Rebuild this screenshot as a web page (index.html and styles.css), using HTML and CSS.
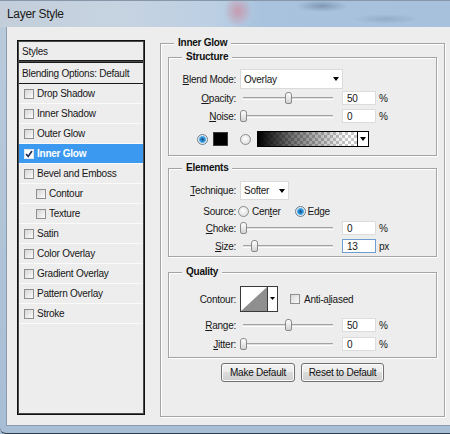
FILE: index.html
```html
<!DOCTYPE html>
<html>
<head>
<meta charset="utf-8">
<title>Layer Style</title>
<link rel="stylesheet" href="styles.css">
</head>
<body>
<div class="window">
  <div class="titlebar"><span class="title">Layer Style</span></div>
  <div class="frame">
    <div class="client">
      <div class="styles-panel">
        <div class="sp-head">Styles</div>
        <div class="sp-blend">Blending Options: Default</div>
        <ul class="sp-list">
          <li class="sp-item"><span class="cb"></span>Drop Shadow</li>
          <li class="sp-item"><span class="cb"></span>Inner Shadow</li>
          <li class="sp-item"><span class="cb"></span>Outer Glow</li>
          <li class="sp-item selected"><span class="cb checked"><svg width="8" height="8" viewBox="0 0 8 8"><path d="M1 4 L3.2 6.4 L7 1" fill="none" stroke="#1d2a5c" stroke-width="1.6"/></svg></span>Inner Glow</li>
          <li class="sp-item"><span class="cb"></span>Bevel and Emboss</li>
          <li class="sp-item sub"><span class="cb"></span>Contour</li>
          <li class="sp-item sub"><span class="cb"></span>Texture</li>
          <li class="sp-item"><span class="cb"></span>Satin</li>
          <li class="sp-item"><span class="cb"></span>Color Overlay</li>
          <li class="sp-item"><span class="cb"></span>Gradient Overlay</li>
          <li class="sp-item"><span class="cb"></span>Pattern Overlay</li>
          <li class="sp-item"><span class="cb"></span>Stroke</li>
        </ul>
      </div>

      <div class="group outer">
        <div class="gtitle">Inner Glow</div>

        <div class="group inner structure">
          <div class="gtitle">Structure</div>
          <div class="row r-blend">
            <span class="lbl"><u>B</u>lend Mode:</span>
            <div class="select blend"><span class="sel-text">Overlay</span><i class="tri"></i></div>
          </div>
          <div class="row r-opacity">
            <span class="lbl"><u>O</u>pacity:</span>
            <div class="slider"><span class="track"></span><span class="thumb" style="left:45px"></span></div>
            <span class="num">50</span><span class="unit">%</span>
          </div>
          <div class="row r-noise">
            <span class="lbl"><u>N</u>oise:</span>
            <div class="slider"><span class="track"></span><span class="thumb" style="left:0px"></span></div>
            <span class="num">0</span><span class="unit">%</span>
          </div>
          <div class="row r-color">
            <span class="radio on"></span>
            <span class="swatch"></span>
            <span class="radio r2"></span>
            <div class="grad"><span class="grad-fill"></span><span class="grad-dd"><i class="tri"></i></span></div>
          </div>
        </div>

        <div class="group inner elements">
          <div class="gtitle">Elements</div>
          <div class="row r-tech">
            <span class="lbl"><u>T</u>echnique:</span>
            <div class="select tech"><span class="sel-text">Softer</span><i class="tri"></i></div>
          </div>
          <div class="row r-source">
            <span class="lbl">Source:</span>
            <span class="radio src1"></span><span class="opt">Cen<u>t</u>er</span>
            <span class="radio on src2"></span><span class="opt edge">Edge</span>
          </div>
          <div class="row r-choke">
            <span class="lbl"><u>C</u>hoke:</span>
            <div class="slider"><span class="track"></span><span class="thumb" style="left:0px"></span></div>
            <span class="num">0</span><span class="unit">%</span>
          </div>
          <div class="row r-size">
            <span class="lbl"><u>S</u>ize:</span>
            <div class="slider"><span class="track"></span><span class="thumb" style="left:11px"></span></div>
            <span class="num focus">13</span><span class="unit">px</span>
          </div>
        </div>

        <div class="group inner quality">
          <div class="gtitle">Quality</div>
          <div class="row r-contour">
            <span class="lbl">Contour:</span>
            <svg class="contour" width="38" height="26" viewBox="0 0 38 26">
              <rect x="0.5" y="0.5" width="37" height="25" fill="#fff" stroke="#3a3a3a"/>
              <polygon points="1,25 27,1 27,25" fill="#8f8f8f"/>
              <line x1="27.5" y1="1" x2="27.5" y2="25" stroke="#3a3a3a"/>
              <polygon points="30,11 35,11 32.5,14" fill="#000"/>
            </svg>
            <span class="cb aa"></span><span class="opt">Anti-a<u>l</u>iased</span>
          </div>
          <div class="row r-range">
            <span class="lbl"><u>R</u>ange:</span>
            <div class="slider"><span class="track"></span><span class="thumb" style="left:45px"></span></div>
            <span class="num">50</span><span class="unit">%</span>
          </div>
          <div class="row r-jitter">
            <span class="lbl"><u>J</u>itter:</span>
            <div class="slider"><span class="track"></span><span class="thumb" style="left:0px"></span></div>
            <span class="num">0</span><span class="unit">%</span>
          </div>
        </div>

        <div class="buttons">
          <div class="btn b-make">Make Default</div>
          <div class="btn b-reset">Reset to Default</div>
        </div>
      </div>
    </div>
  </div>
</div>
</body>
</html>
```

FILE: styles.css
```css
* { box-sizing: border-box; margin: 0; padding: 0; }
html, body { width: 450px; height: 434px; overflow: hidden; }
body {
  font-family: "Liberation Sans", Arial, sans-serif;
  font-size: 10px;
  letter-spacing: -0.25px;
  color: #161616;
  background: #a9bfd6;
}
u { text-decoration: underline; text-underline-offset: 1px; }

.window { width: 450px; height: 434px; display: flex; flex-direction: column; }

.titlebar {
  height: 27px;
  flex: none;
  display: flex;
  align-items: center;
  padding-left: 7px;
  border-top: 1px solid #8797aa;
  background:
    radial-gradient(ellipse 14px 16px at 238px 10px, rgba(206,140,160,0.75), rgba(206,140,160,0)),
    radial-gradient(ellipse 26px 6px at 322px 5px, rgba(80,100,130,0.45), rgba(80,100,130,0)),
    radial-gradient(ellipse 34px 5px at 386px 18px, rgba(110,130,160,0.35), rgba(110,130,160,0)),
    linear-gradient(90deg, #c3ceda 0px, #c6d3e1 120px, #bccfe3 215px, #a9c3de 260px, #a7c1dc 450px);
}
.title { font-size: 12px; letter-spacing: -0.3px; color: #1b1b1b; }

.frame {
  flex: 1;
  display: flex;
  flex-direction: column;
  padding: 0 0 7px 6px;
  background: linear-gradient(#b9cadb, #a8bed5);
  border-bottom: 1px solid #2e3c4c;
  border-bottom-left-radius: 6px;
}
.client {
  flex: 1;
  display: flex;
  align-items: flex-start;
  gap: 15px;
  padding: 13px 0 0 10px;
  background: #ededed;
  border-left: 1px solid #8b9bad;
  border-bottom: 1px solid #8b9bad;
}

/* Styles list */
.styles-panel {
  width: 128px;
  height: 375px;
  flex: none;
  display: flex;
  flex-direction: column;
  border: 1px solid #101010;
  padding: 1px;
  background: #4a4a4a;
}
.sp-head {
  height: 19px;
  display: flex;
  align-items: center;
  padding-left: 3px;
  background: #ededed;
  border-bottom: 1px solid #1a1a1a;
}
.sp-blend {
  margin-top: 1px;
  height: 22px;
  display: flex;
  align-items: center;
  padding-left: 3px;
  background: #ededed;
  border-top: 1px solid #1a1a1a;
  border-bottom: 1px solid #1a1a1a;
}
.sp-list { list-style: none; flex: 1; background: #ededed; }
.sp-item {
  height: 20px;
  display: flex;
  align-items: center;
  padding-left: 5px;
  border-bottom: 1px solid #fafafa;
}
.sp-item.sub { padding-left: 17px; }
.sp-item .cb { margin-right: 3px; }
.sp-item.selected { background: #3b9af0; color: #fff; font-weight: bold; }

.cb {
  width: 10px;
  height: 10px;
  flex: none;
  display: inline-flex;
  align-items: center;
  justify-content: center;
  border: 1px solid #8e8f8f;
  background: linear-gradient(135deg, #d6d6d6, #fbfbfb);
}
.cb.checked { background: #fff; border-color: #dfe6ee; }

/* Groups */
.group {
  display: flex;
  flex-direction: column;
  border: 1px solid #a4a4a4;
  box-shadow: inset 1px 1px 0 #fff, 1px 1px 0 #fff;
}
.outer {
  width: 285px;
  height: 374px;
  flex: none;
  margin-top: 3px;
  padding: 0 7px;
}
.gtitle {
  align-self: flex-start;
  height: 12px;
  line-height: 12px;
  margin-top: -7px;
  padding: 0 4px;
  background: #ededed;
  font-weight: bold;
  color: #111;
}
.outer > .gtitle { margin-left: 6px; }
.inner > .gtitle { margin-left: 13px; }

.structure { margin-top: 8px; padding-bottom: 8px; }
.elements { margin-top: 12px; padding-bottom: 3px; }
.quality { margin-top: 15px; padding-bottom: 6px; }

.row { display: flex; align-items: center; gap: 4px; }
.lbl { width: 67px; flex: none; text-align: right; }

.r-blend { margin-top: 6px; height: 20px; }
.r-opacity { margin-top: 2px; height: 14px; }
.r-noise { margin-top: 4px; height: 14px; }
.r-color { margin-top: 8px; height: 16px; padding-left: 28px; gap: 0; }

.r-tech { margin-top: 7px; height: 19px; }
.r-source { margin-top: 5px; height: 12px; gap: 0; }
.r-source .lbl { margin-right: 2px; }
.r-choke { margin-top: 4px; height: 14px; }
.r-size { margin-top: 4px; height: 14px; }

.r-contour { margin-top: 8px; height: 26px; }
.r-range { margin-top: 6px; height: 14px; }
.r-jitter { margin-top: 5px; height: 14px; }

/* select */
.select {
  display: flex;
  align-items: center;
  background: #fff;
  border: 1px solid #dadada;
  padding-left: 3px;
}
.select.blend { width: 103px; height: 20px; }
.select.tech { width: 49px; height: 19px; }
.sel-text { flex: 1; }
.tri {
  width: 0; height: 0;
  border-left: 3.5px solid transparent;
  border-right: 3.5px solid transparent;
  border-top: 4px solid #000;
  margin-right: 3px;
}

/* slider */
.slider {
  position: relative;
  width: 96px;
  height: 14px;
  flex: none;
  display: flex;
  align-items: center;
}
.track {
  display: block;
  flex: 1;
  margin: 0 3px;
  height: 3px;
  border-top: 1px solid #a2a2a2;
  border-bottom: 1px solid #fdfdfd;
  background: #dedede;
}
.thumb {
  position: absolute;
  top: 1px;
  width: 7px;
  height: 12px;
  border: 1px solid #8a8a8a;
  border-radius: 3px 3px 2px 2px;
  background: linear-gradient(#ffffff, #d2d2d2);
}
.num {
  width: 34px;
  height: 14px;
  margin-left: 2px;
  display: flex;
  align-items: center;
  padding-left: 4px;
  background: #fff;
  border: 1px solid #dcdcdc;
}
.num.focus { border-color: #6f9fd1; }
.unit { margin-left: -1px; }

/* radios */
.radio {
  width: 11px;
  height: 11px;
  flex: none;
  border-radius: 50%;
  border: 1px solid #8d8d8d;
  background: radial-gradient(circle at 45% 40%, #ffffff, #d4d4d4);
}
.radio.on {
  border-color: #6d7f90;
  background: radial-gradient(circle, #0f4f86 0px, #2a88cc 2px, #66b8ea 3.3px, #e9eef3 3.8px, #c9d2da 100%);
}
.swatch {
  width: 15px;
  height: 14px;
  margin-left: 5px;
  background: #000;
  border: 1px solid #3a3a3a;
}
.radio.r2 { margin-left: 12px; }
.grad {
  width: 112px;
  height: 16px;
  margin-left: 6px;
  display: flex;
  border: 1px solid #000;
}
.grad-fill {
  flex: 1;
  background:
    linear-gradient(90deg, #000 0%, rgba(0,0,0,0.55) 35%, rgba(0,0,0,0) 90%),
    conic-gradient(#c8c8c8 25%, #ffffff 0 50%, #c8c8c8 0 75%, #ffffff 0) 0 0 / 6px 6px;
}
.grad-dd {
  width: 11px;
  display: flex;
  align-items: center;
  justify-content: center;
  background: #fff;
  border-left: 1px solid #000;
}
.grad-dd .tri { margin: 0; border-left-width: 3px; border-right-width: 3px; }

.opt { margin-left: 3px; }
.radio.src1 { margin-left: 0; }
.radio.src2 { margin-left: 14px; }
.opt.edge { margin-left: 2px; }

.contour { flex: none; }
.cb.aa { margin-left: 8px; }
.r-contour .opt { margin-left: 0; }

/* buttons */
.buttons { display: flex; justify-content: center; gap: 6px; margin-top: 5px; }
.btn {
  height: 19px;
  display: flex;
  align-items: center;
  justify-content: center;
  border: 1px solid #707070;
  border-radius: 3px;
  box-shadow: inset 0 0 0 1px #fbfbfb;
  background: linear-gradient(#f3f3f3 0%, #ebebeb 50%, #dcdcdc 50%, #cfcfcf 100%);
  color: #111;
}
.b-make { width: 74px; }
.b-reset { width: 83px; }
```
